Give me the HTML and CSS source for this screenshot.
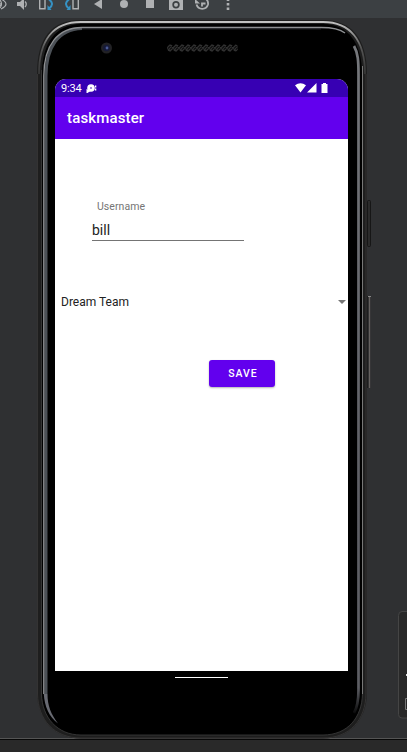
FILE: index.html
```html
<!DOCTYPE html>
<html lang="en">
<head>
<meta charset="utf-8">
<title>taskmaster</title>
<link rel="stylesheet" href="styles.css">
</head>
<body>
<div class="toolbar">
  <svg width="240" height="18" viewBox="0 0 240 18" fill="#afb1b3">
    <path d="M0 0Q3 4 0 8M1 -1Q11 4 1 9M0 3v3" fill="none" stroke="#afb1b3" stroke-width="1.200"/>
    <path d="M17 2h3l4-4v12l-4-4h-3z"/>
    <path d="M25 1.500Q27.500 4 25 7" fill="none" stroke="#afb1b3" stroke-width="1.300"/>
    <path d="M39.700 -2v10.800h5.300V-2M73 -2v10.800h5.300V-2" fill="none" stroke="#afb1b3" stroke-width="1.400"/>
    <path d="M48 -1.500Q55.500 4 49 8.500M70 -1.500Q62.500 4 69 8.500" fill="none" stroke="#3592c4" stroke-width="2"/>
    <path d="M47.500 5v5h4zM70.500 5v5h-4z" fill="#3592c4"/>
    <path d="M94 4l8-5v10z"/>
    <circle cx="124" cy="4" r="4"/>
    <path d="M146 0h8v8h-8z"/>
    <path fill-rule="evenodd" d="M169 0h14v10h-14zM176 1a3.700 3.700 0 1 0 0 7.400a3.700 3.700 0 0 0 0-7.400z"/>
    <circle cx="176" cy="4.700" r="2"/>
    <path d="M196.500 4.500A6 6 0 0 0 208 4.500Q208.500 1 206 -1M202 6.500V3.500h3.500" fill="none" stroke="#afb1b3" stroke-width="1.800"/>
    <path d="M195 -1v4.500h5z"/>
    <path d="M226.700 -1h2.600v2h-2.600zM226.700 3h2.600v2.500h-2.600zM226.700 7.500h2.600v2.500h-2.600z"/>
  </svg>
</div>
<main class="stage">
  <svg class="frame" width="407" height="734" viewBox="0 18 407 734" fill="none">
    <defs>
      <linearGradient id="rim" x1="0" y1="20" x2="0" y2="75" gradientUnits="userSpaceOnUse">
        <stop offset="0" stop-color="#c8c8c8"/><stop offset=".2" stop-color="#a0a0a0"/><stop offset=".5" stop-color="#555"/><stop offset="1" stop-color="#343434"/>
      </linearGradient>
      <linearGradient id="side" x1="0" y1="20" x2="0" y2="738" gradientUnits="userSpaceOnUse">
        <stop offset="0" stop-color="#77797d"/><stop offset=".7" stop-color="#5d5e64"/><stop offset=".93" stop-color="#5d5e64"/><stop offset=".97" stop-color="#000"/>
      </linearGradient>
      <pattern id="mesh" x="167" y="44" width="6" height="8" patternUnits="userSpaceOnUse">
        <path d="M0 4l3-3 3 3-3 3zM1 7l4-6" stroke="#303030" stroke-width="1.300"/>
      </pattern>
    </defs>
    <path d="M0 738.500H407" stroke="#555"/>
    <path d="M0 739.500H407" stroke="#080808"/>
    <path d="M0 740H407V752H0z" fill="#292929"/>
    <rect x="367.500" y="200.500" width="3" height="46" rx="1" fill="#2b2b2b" stroke="#161616"/>
    <path d="M367.500 296v92" stroke="#1d1d1d" stroke-width="1.500"/>
    <path d="M369.500 296v92" stroke="#65615f" stroke-width="1.300"/>
    <path d="M368 296.500h3" stroke="#888"/>
    <path d="M37 74C37 37 52 20 81 20H323C351 20 367 38 367 74V694C366 720 350 738.500 323 738.500H81C54 738.500 38 720 37 694z" fill="#1e1e1e"/>
    <path d="M37.500 74V694C38 720 54 738 81 738H323C350 738 365.500 720 366 694V74" stroke="#343333"/>
    <path d="M39 74C39 40 53 22 81 22H323C350 22 365 40 365 74" stroke="url(#rim)" stroke-width="1.800"/>
    <path d="M42 74C42 43 56 24 81 24H323C348 24 362 43 362 74V694C362 717 348 735 323 735H81C57 735 42 717 42 694z" fill="#000"/>
    <path d="M41.500 70V694C42 717 57 735 81 735H323C348 735 362 717 362.500 694" stroke="#3c3c3c" stroke-width=".8"/>
    <path d="M46 694V76C46 48 58 29 82 28.500" stroke="#4c5157" stroke-width="3"/>
    <path d="M43.800 694V76C43.800 45 58 27.500 82 27.500H321C333 27.500 340 29 345 33" stroke="#8e9093" stroke-width="1.400"/>
    <path d="M82 28.800H321" stroke="#34363a"/>
    <path d="M43.800 694C44.500 706 49 717 58 723.500C51 714 47.500 706 47.500 694z" fill="#686a72"/>
    <path d="M354 46C358 53 358.500 61 358.500 74V690C358.500 700 357 708 354 713" stroke="url(#side)" stroke-width="2.700"/>
    <path d="M362.500 66V694" stroke="#777"/>
    <rect x="167" y="44" width="71" height="8" rx="4" fill="url(#mesh)"/>
    <circle cx="106.500" cy="48" r="5.500" fill="#222225"/>
    <circle cx="106.500" cy="48" r="3.300" fill="#161a38"/>
    <circle cx="107" cy="48" r="1.400" fill="#4b5a94"/>
    <path d="M407 611.500h-5q-3.500 0-3.500 4v99q0 3.500 3.500 3.500h5" fill="#292929" stroke="#454545"/>
    <path d="M406 674h1v2h-1z" fill="#ddd"/>
    <path d="M407 698.500h-1.500v11h1.500" stroke="#777"/>
  </svg>
  <section class="screen">
    <div class="status">
      <span class="time">9:34</span>
      <svg class="notice" width="11" height="10" viewBox="0 0 11 10" fill="#fff"><circle cx="5" cy="4" r="3.800"/><path d="M.5 5v4h1l3-2zM9 1.500h1.300v2H9zM9 4.500h1.300v2H9z"/><circle cx="5" cy="4" r=".8" fill="#3700b3"/></svg>
      <svg class="signals" width="34" height="10" viewBox="0 0 34 10" fill="#fff"><path d="M0 2.200Q5.500-1.500 11 2.200L5.500 9.500zM21.500 0v9.500H12zM26.500 1h1.500V0h3v1h1.500v9h-6z"/></svg>
    </div>
    <header class="appbar">taskmaster</header>
    <form class="content">
      <label class="label">Username</label>
      <div class="field">bill</div>
      <div class="spinner"><span>Dream Team</span><i class="caret"></i></div>
      <button class="save" type="button">SAVE</button>
    </form>
  </section>
  <div class="home"></div>
</main>
</body>
</html>
```
FILE: styles.css
```css
* { box-sizing: border-box; }
body {
  margin: 0;
  width: 407px;
  height: 752px;
  overflow: hidden;
  background: #2f3032;
  font-family: Roboto, "Liberation Sans", sans-serif;
}
.toolbar { height: 18px; background: #3c4043; }
.toolbar svg { display: block; }
.stage { position: relative; height: 734px; padding: 61px 59px 0 55px; }
.frame { position: absolute; left: 0; top: 0; }
.screen {
  position: relative;
  height: 592px;
  background: #fff;
  border-radius: 11px 11px 0 0;
  overflow: hidden;
}
.status {
  display: flex;
  height: 18px;
  padding: 0 19px 0 6px;
  background: #3700b3;
  color: #fff;
}
.time { width: 25px; font-size: 11px; line-height: 19px; letter-spacing: -.15px; white-space: nowrap; }
.notice { margin-top: 5px; }
.signals { margin: 4px 0 0 auto; }
.appbar {
  height: 42px;
  padding-left: 12px;
  background: #6200ee;
  color: #fff;
  font-size: 15px;
  font-weight: 500;
  line-height: 43px;
  letter-spacing: .15px;
}
.content { display: flex; flex-direction: column; align-items: flex-start; padding-top: 60px; }
.label { margin-left: 42px; color: #757575; font-size: 10.5px; line-height: 15px; letter-spacing: .05px; }
.field {
  width: 152px;
  height: 27px;
  margin-left: 37px;
  border-bottom: 1px solid #747474;
  color: #222;
  font-size: 14px;
  line-height: 33px;
}
.spinner {
  display: flex;
  justify-content: space-between;
  align-items: center;
  width: 100%;
  height: 24px;
  margin-top: 49px;
  padding: 0 2px 0 6px;
  color: #222;
  font-size: 12px;
  letter-spacing: 0;
}
.caret { border: 4px solid transparent; border-top-color: #757575; border-bottom: 0; }
.save {
  width: 66px;
  height: 27px;
  margin: 46px 0 0 154px;
  padding: 0 0 0 2px;
  border: 0;
  border-radius: 3px;
  background: #6200ee;
  box-shadow: 0 1px 2px rgba(0, 0, 0, .3);
  color: #fff;
  font: 500 10.5px/28px Roboto, "Liberation Sans", sans-serif;
  letter-spacing: 1px;
}
.home { position: relative; width: 53px; height: 1px; margin: 6px 0 0 120px; background: #fff; }
```
